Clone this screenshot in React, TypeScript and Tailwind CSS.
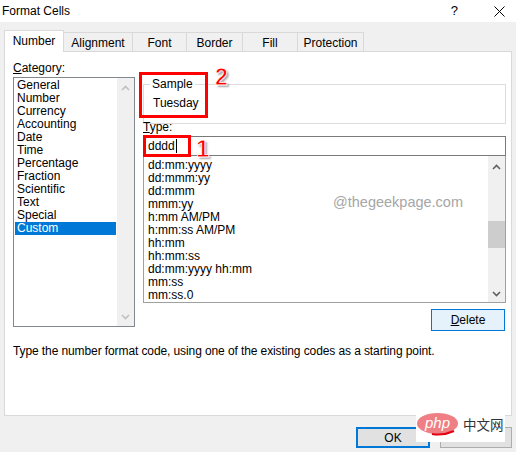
import React from "react";

const categories = [
  "General",
  "Number",
  "Currency",
  "Accounting",
  "Date",
  "Time",
  "Percentage",
  "Fraction",
  "Scientific",
  "Text",
  "Special",
  "Custom",
];

const types = [
  "dd:mm:yyyy",
  "dd:mmm:yy",
  "dd:mmm",
  "mmm:yy",
  "h:mm AM/PM",
  "h:mm:ss AM/PM",
  "hh:mm",
  "hh:mm:ss",
  "dd:mm:yyyy hh:mm",
  "mm:ss",
  "mm:ss.0",
];

function Chevron({ up, color }: { up: boolean; color: string }) {
  return (
    <svg width="9" height="6" viewBox="0 0 9 6">
      <polyline
        points={up ? "1,5 4.5,1.5 8,5" : "1,1 4.5,4.5 8,1"}
        fill="none"
        stroke={color}
        strokeWidth="1.6"
      />
    </svg>
  );
}

export default function App() {
  return (
    <div className="w-[516px] h-[452px] bg-[#f0f0f0] flex flex-col relative overflow-hidden font-['Liberation_Sans',Arial,sans-serif] text-[12px] text-black">
      {/* Title bar */}
      <div className="h-[22px] bg-white flex items-center shrink-0">
        <div className="pl-[2px] leading-[14px]">Format Cells</div>
        <div className="ml-auto flex items-center">
          <span className="text-[13px] mr-[36px]">?</span>
          <svg width="11" height="11" viewBox="0 0 11 11" className="mr-[11px]">
            <line x1="0.5" y1="0.5" x2="10.5" y2="10.5" stroke="#000" strokeWidth="1" />
            <line x1="10.5" y1="0.5" x2="0.5" y2="10.5" stroke="#000" strokeWidth="1" />
          </svg>
        </div>
      </div>

      {/* Tabs */}
      <div className="h-[29px] flex items-end pl-[4px] shrink-0">
        <div className="w-[60px] h-[22px] bg-white border border-[#d9d9d9] border-b-0 relative z-10 -mb-px flex items-center justify-center pb-[1px]">
          Number
        </div>
        <div className="w-[69px] h-[19px] border border-l-0 border-b-0 border-[#d9d9d9] flex items-center justify-center pt-[1px]">
          Alignment
        </div>
        <div className="w-[54px] h-[19px] border border-l-0 border-b-0 border-[#d9d9d9] flex items-center justify-center pt-[1px]">
          Font
        </div>
        <div className="w-[56px] h-[19px] border border-l-0 border-b-0 border-[#d9d9d9] flex items-center justify-center pt-[1px]">
          Border
        </div>
        <div className="w-[55px] h-[19px] border border-l-0 border-b-0 border-[#d9d9d9] flex items-center justify-center pt-[1px]">
          Fill
        </div>
        <div className="w-[66px] h-[19px] border border-l-0 border-b-0 border-[#d9d9d9] flex items-center justify-center pt-[1px]">
          Protection
        </div>
      </div>

      {/* Panel */}
      <div className="mx-[4px] h-[365px] bg-white border border-[#d9d9d9] shrink-0 flex flex-col pl-[8px]">
        <div className="flex">
          {/* Left column */}
          <div className="flex flex-col pt-[10px]">
            <div className="h-[13px] leading-[13px]">
              <span className="underline underline-offset-1">C</span>ategory:
            </div>
            <div className="mt-[2px] w-[122px] h-[250px] border border-[#828790] flex">
              <div className="flex-1 flex flex-col pt-[1px] pl-[1px] pr-[1px]">
                {categories.map((c) => (
                  <div
                    key={c}
                    className={
                      c === "Custom"
                        ? "h-[13px] leading-[13px] pl-[2px] bg-[#0078d7] text-white"
                        : "h-[13px] leading-[13px] pl-[2px]"
                    }
                  >
                    {c}
                  </div>
                ))}
              </div>
              <div className="w-[17px] bg-[#f0f0f0] flex flex-col">
                <div className="h-[20px] flex items-center justify-center">
                  <Chevron up color="#c0c0c0" />
                </div>
                <div className="flex-1" />
                <div className="h-[18px] flex items-center justify-center">
                  <Chevron up={false} color="#c0c0c0" />
                </div>
              </div>
            </div>
          </div>

          {/* Right column */}
          <div className="ml-[8px] w-[363px] flex flex-col pt-[26px]">
            <fieldset className="h-[46px] border border-[#dcdcdc] m-0 p-0 block">
              <legend className="ml-[6px] px-[2px] leading-[13px]">Sample</legend>
              <div className="pl-[9px] mt-[6px] leading-[13px]">Tuesday</div>
            </fieldset>
            <div className="-mt-[3px] h-[13px] leading-[13px]">
              <span className="underline underline-offset-1">T</span>ype:
            </div>
            <div className="mt-[2px] h-[20px] border border-[#7a7a7a] flex items-center pl-[4px]">
              <span className="leading-[14px]">dddd</span>
              <span className="w-px h-[14px] bg-black ml-[1px]" />
            </div>
            <div className="h-[147px] border border-t-0 border-[#a0a0a0] flex">
              <div className="flex-1 flex flex-col pt-[3px] pl-[4px]">
                {types.map((t) => (
                  <div key={t} className="h-[13px] leading-[13px] whitespace-nowrap">
                    {t}
                  </div>
                ))}
              </div>
              <div className="w-[17px] bg-[#f0f0f0] flex flex-col">
                <div className="h-[22px] flex items-center justify-center">
                  <Chevron up color="#606060" />
                </div>
                <div className="flex-1 flex flex-col">
                  <div className="mt-[43px] h-[27px] bg-[#cdcdcd]" />
                </div>
                <div className="h-[17px] flex items-center justify-center">
                  <Chevron up={false} color="#606060" />
                </div>
              </div>
            </div>
            <div className="mt-[6px] self-end mr-[1px] w-[74px] h-[22px] border border-[#0078d7] bg-[#e5f1fb] flex items-center justify-center">
              <span>
                <span className="underline underline-offset-1">D</span>elete
              </span>
            </div>
          </div>
        </div>
        <div className="mt-[14px] leading-[13px] whitespace-nowrap tracking-[-0.1px]">
          Type the number format code, using one of the existing codes as a starting point.
        </div>
      </div>

      {/* Bottom buttons */}
      <div className="flex justify-end pt-[11px] pr-[4px] gap-[10px]">
        <div className="w-[74px] h-[21px] border-2 border-[#0078d7] bg-[#e1e1e1] flex items-center justify-center">
          OK
        </div>
        <div className="w-[72px] h-[21px] border border-[#adadad] bg-[#e1e1e1] flex items-center justify-center">
          Cancel
        </div>
      </div>

      {/* Overlays */}
      <div className="absolute left-[139px] top-[72px] w-[69px] h-[46px] border-[3px] border-[#ff0000]" />
      <div className="absolute left-[215px] top-[64px] text-[23px] leading-[26px] font-bold text-[#ff0000] [-webkit-text-stroke:0.8px_white] [text-shadow:2px_2px_2px_rgba(0,0,0,0.35)]">
        2
      </div>
      <div className="absolute left-[143px] top-[135px] w-[48px] h-[22px] border-[3px] border-[#ff0000]" />
      <div className="absolute left-[196px] top-[136px] text-[24px] leading-[26px] font-bold text-[#ff0000] [-webkit-text-stroke:0.8px_white] [text-shadow:2px_2px_2px_rgba(0,0,0,0.35)]">
        1
      </div>
      <div className="absolute left-[333px] top-[193px] text-[14.5px] leading-[18px] text-[#a6a6a6]">
        @thegeekpage.com
      </div>

      {/* php watermark */}
      <div className="absolute left-[416px] top-[405px] w-[89px] h-[37px] bg-white flex items-center">
        <div className="relative ml-[1px] shrink-0 w-[41px] h-[21px] rounded-[50%] bg-[#ef7f84] flex items-center justify-center">
          <span className="text-white italic text-[15px] leading-[15px] -mt-[2px]">php</span>
          <svg className="absolute left-[14px] top-[17px]" width="24" height="6" viewBox="0 0 24 6">
            <path d="M1 4 Q 12 6 23 1" stroke="#e00010" strokeWidth="2" fill="none" />
          </svg>
        </div>
        <span className="ml-[5px] whitespace-nowrap text-[13.5px] leading-[16px] text-[#333] font-['Noto_Sans_CJK_SC',sans-serif]">
          中文网
        </span>
      </div>
    </div>
  );
}
